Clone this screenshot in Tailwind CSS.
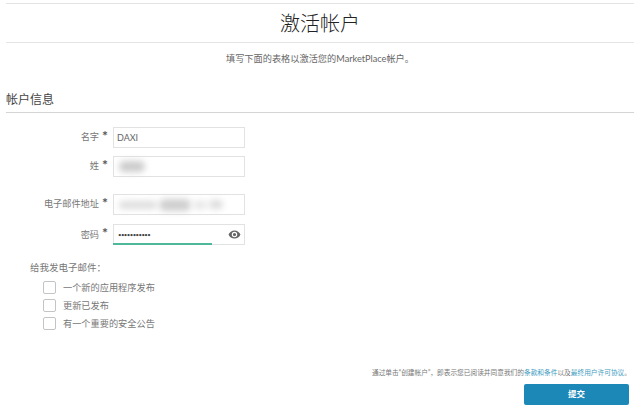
<!DOCTYPE html>
<html lang="zh">
<head>
  <meta charset="UTF-8">
  <title>激活帐户</title>
  <script src="https://cdn.jsdelivr.net/npm/@tailwindcss/browser@4"></script>
</head>
<body class="bg-white w-[640px] h-[408px] overflow-hidden font-['Lato','Noto_Sans_CJK_SC',sans-serif] text-[#666]">
  <div class="px-[6px] pt-[3px]">
    <!-- Title -->
    <div class="border-t border-b border-[#e4e4e4] h-[40px] flex items-center justify-center">
      <h1 class="text-[20px] leading-none text-[#222] font-light">激活帐户</h1>
    </div>
    <p class="text-center text-[9.2px] leading-[14px] mt-[9px] text-[#666]">填写下面的表格以激活您的MarketPlace帐户。</p>

    <!-- Section -->
    <h2 class="mt-[26px] text-[12px] leading-[16px] pb-[4px] border-b border-[#d4d4d4] text-[#444] h-[21px]">帐户信息</h2>

    <!-- Fields -->
    <div class="mt-[14px] flex flex-col">
      <div class="flex items-center h-[21px]">
        <label class="w-[93px] text-right text-[9.2px] text-[#777] -mt-[2px]">名字</label>
        <span class="w-[12px] text-center text-[14px] font-bold leading-none text-[#555] -mt-[4px]">*</span>
        <div class="ml-[2px] w-[132px] h-[21px] border border-[#e2e2e2] flex items-center px-[3px] text-[9px] text-[#666]">DAXI</div>
      </div>
      <div class="flex items-center h-[21px] mt-[8px]">
        <label class="w-[93px] text-right text-[9.2px] text-[#777] -mt-[2px]">姓</label>
        <span class="w-[12px] text-center text-[14px] font-bold leading-none text-[#555] -mt-[4px]">*</span>
        <div class="ml-[2px] w-[132px] h-[21px] border border-[#e2e2e2] flex items-center px-[5px]">
          <div class="w-[26px] h-[11px] bg-[#ccc] rounded-full blur-[3px]"></div>
        </div>
      </div>
      <div class="flex items-center h-[21px] mt-[17px]">
        <label class="w-[93px] text-right text-[9.2px] text-[#777] -mt-[2px]">电子邮件地址</label>
        <span class="w-[12px] text-center text-[14px] font-bold leading-none text-[#555] -mt-[4px]">*</span>
        <div class="ml-[2px] w-[132px] h-[21px] border border-[#e2e2e2] flex items-center px-[5px] gap-[2px]">
          <div class="w-[38px] h-[8px] bg-[#ddd] rounded-full blur-[3px]"></div>
          <div class="w-[32px] h-[12px] bg-[#cfcfcf] rounded-full blur-[3px]"></div>
          <div class="w-[14px] h-[8px] bg-[#e6e6e6] rounded-full blur-[3px]"></div>
          <div class="w-[14px] h-[9px] bg-[#dcdcdc] rounded-full blur-[3px]"></div>
        </div>
      </div>
      <div class="flex items-center h-[21px] mt-[9px]">
        <label class="w-[93px] text-right text-[9.2px] text-[#777]">密码</label>
        <span class="w-[12px] text-center text-[14px] font-bold leading-none text-[#555] -mt-[4px]">*</span>
        <div class="ml-[2px] relative w-[132px] h-[21px] border border-[#e2e2e2] flex items-center justify-between pl-[4px] pr-[3px]">
          <span class="text-[6px] leading-none tracking-[-0.55px] text-[#444]">•••••••••••</span>
          <svg class="w-[13px] h-[13px] text-[#666]" viewBox="0 0 24 24" fill="currentColor"><path d="M12 4.500C7 4.500 2.700 7.600 1 12c1.700 4.400 6 7.500 11 7.500s9.300-3.100 11-7.500c-1.700-4.400-6-7.500-11-7.500zM12 17a5 5 0 1 1 0-10 5 5 0 0 1 0 10zm0-8a3 3 0 1 0 0 6 3 3 0 0 0 0-6z"/></svg>
          <div class="absolute left-[-1px] bottom-[-1px] w-[99px] h-[2px] bg-[#4fb89a]"></div>
        </div>
      </div>
    </div>

    <!-- Email prefs -->
    <p class="mt-[16px] ml-[24px] text-[9.5px] leading-[14px] text-[#777]">给我发电子邮件：</p>
    <div class="mt-[6px] ml-[37px] flex flex-col gap-[5px] text-[9.2px] text-[#777]">
      <label class="flex items-center gap-[7px] h-[13px]"><span class="w-[13px] h-[13px] border border-[#c4c4c4] rounded-[2px]"></span>一个新的应用程序发布</label>
      <label class="flex items-center gap-[7px] h-[13px]"><span class="w-[13px] h-[13px] border border-[#c4c4c4] rounded-[2px]"></span>更新已发布</label>
      <label class="flex items-center gap-[7px] h-[13px]"><span class="w-[13px] h-[13px] border border-[#c4c4c4] rounded-[2px]"></span>有一个重要的安全公告</label>
    </div>

    <!-- Footer -->
    <p class="mt-[37px] text-right pr-[3px] text-[6.7px] leading-[10px] text-[#777] whitespace-nowrap">通过单击“创建帐户”，即表示您已阅读并同意我们的<span class="text-[#3f9cbf]">条款和条件</span>以及<span class="text-[#3f9cbf]">最终用户许可协议</span>。</p>
    <div class="mt-[7px] flex justify-end pr-[5px]">
      <button class="w-[105px] h-[21px] bg-[#1c88b8] rounded-[2px] text-white text-[8.5px] font-bold">提交</button>
    </div>
  </div>
</body>
</html>
